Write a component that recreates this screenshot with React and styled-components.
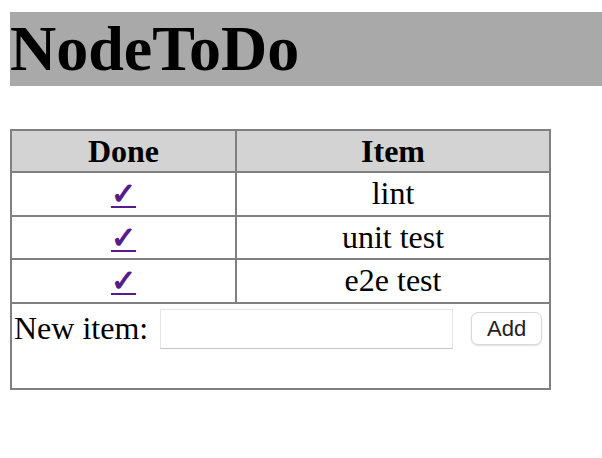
import styled, { createGlobalStyle } from "styled-components"

const GlobalStyle = createGlobalStyle`
    body {
        margin: 0 0 0 10px;
        font-family: "Liberation Serif", "Times New Roman", serif;
        font-size: 32px;
        color: #000;
        background: #fff;
    }
`

const Title = styled.h1`
    margin: 12px 0 43px;
    background: darkgray;
    font-size: 64px;
    font-weight: bold;
    line-height: 74px;
`

const TodoTable = styled.table`
    border-collapse: collapse;
    table-layout: fixed;
    width: 541px;
    border: 2px solid gray;
`

const HeadCell = styled.th`
    border: 2px solid gray;
    background: lightgray;
    padding: 2px;
    height: 36px;
    line-height: 36px;
    text-align: center;
`

const Cell = styled.td`
    border: 2px solid gray;
    padding: 2px;
    height: 37.5px;
    line-height: 37px;
    text-align: ${props => (props.$left ? "left" : "center")};
    vertical-align: ${props => (props.$left ? "top" : "middle")};
`

const DoneLink = styled.a`
    display: inline-block;
    line-height: 30px;
    color: #551a8b;
    text-decoration: underline;
    text-decoration-thickness: 2px;
    text-underline-offset: 2px;
    font-family: "DejaVu Sans", sans-serif;
    font-size: 30px;
    -webkit-text-stroke: 1.2px #551a8b;
`

const NewItemForm = styled.form`
    display: flex;
    align-items: center;
    margin: 3px 0 37px;
`

const Label = styled.label`
    margin-right: 12px;
`

const TextInput = styled.input`
    width: 293px;
    height: 40px;
    box-sizing: border-box;
    border: 1px solid #e4e4e4;
    border-bottom-color: #c4c4c4;
    border-radius: 0;
    margin-right: 18px;
    padding: 0 6px;
    font-size: 18px;
`

const AddButton = styled.button`
    width: 71px;
    height: 33px;
    border: 1px solid #d8d8d8;
    border-radius: 7px;
    background: #fff;
    box-shadow: 0 1px 2px rgba(0, 0, 0, 0.12);
    font-family: "Liberation Sans", Arial, sans-serif;
    font-size: 22px;
    color: #222;
    padding: 0;
`

const items = ["lint", "unit test", "e2e test"]

const App = () => {
    return (
        <>
            <GlobalStyle />
            <Title>NodeToDo</Title>
            <TodoTable>
                <colgroup>
                    <col style={{ width: "225px" }} />
                    <col />
                </colgroup>
                <thead>
                    <tr>
                        <HeadCell>Done</HeadCell>
                        <HeadCell>Item</HeadCell>
                    </tr>
                </thead>
                <tbody>
                    {items.map(item => (
                        <tr key={item}>
                            <Cell><DoneLink href="#">✓</DoneLink></Cell>
                            <Cell>{item}</Cell>
                        </tr>
                    ))}
                    <tr>
                        <Cell colSpan={2} $left>
                            <NewItemForm onSubmit={e => e.preventDefault()}>
                                <Label htmlFor="new-item">New item:</Label>
                                <TextInput id="new-item" type="text" />
                                <AddButton type="submit">Add</AddButton>
                            </NewItemForm>
                        </Cell>
                    </tr>
                </tbody>
            </TodoTable>
        </>
    )
}

export default App
